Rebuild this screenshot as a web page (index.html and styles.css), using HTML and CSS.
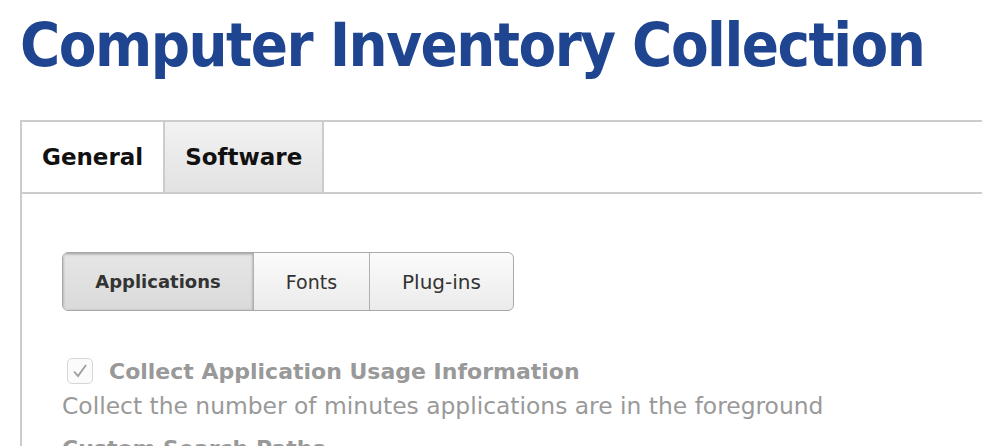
FILE: index.html
```html
<!DOCTYPE html>
<html lang="en">
<head>
    <meta charset="UTF-8">
    <meta name="viewport" content="width=device-width, initial-scale=1.0">
    <title>Computer Inventory Collection</title>
    <link rel="stylesheet" href="styles.css">
</head>
<body>
    <h1 class="page-title">Computer Inventory Collection</h1>

    <div class="panel">
        <div class="tabs">
            <div class="tab active">General</div>
            <div class="tab">Software</div>
        </div>

        <div class="panel-body">
            <div class="segmented">
                <div class="segment pressed">Applications</div>
                <div class="segment">Fonts</div>
                <div class="segment">Plug-ins</div>
            </div>

            <div class="option">
                <label class="check-row">
                    <span class="checkbox">
                        <svg width="16" height="16" viewBox="0 0 16 16">
                            <path d="M2 8.5 L6 13 L14 2" fill="none" stroke="#9c9c9c" stroke-width="1.8"/>
                        </svg>
                    </span>
                    <span class="option-label">Collect Application Usage Information</span>
                </label>
                <p class="option-help">Collect the number of minutes applications are in the foreground</p>
            </div>

            <div class="option">
                <div class="option-label">Custom Search Paths</div>
            </div>
        </div>
    </div>
</body>
</html>
```

FILE: styles.css
```css
body {
    margin: 0;
    padding: 0 0 0 20px;
    font-family: "DejaVu Sans", Verdana, sans-serif;
    background: #fff;
    overflow: hidden;
}
.page-title {
    margin: 0;
    padding-top: 12px;
    height: 120px;
    box-sizing: border-box;
    font-family: "DejaVu Sans Condensed", "DejaVu Sans", sans-serif;
    font-size: 61px;
    line-height: 66px;
    letter-spacing: -1.5px;
    font-weight: bold;
    color: #1f4591;
    white-space: nowrap;
}
.panel {
    border-top: 2px solid #cccccc;
    border-left: 2px solid #cccccc;
}
.tabs {
    display: flex;
    height: 70px;
    border-bottom: 2px solid #cccccc;
}
.tab {
    display: flex;
    align-items: center;
    padding: 0 20px;
    font-size: 23px;
    font-weight: bold;
    color: #111;
}
.tab.active {
    background: #fff;
}
.tab:not(.active) {
    background: linear-gradient(#f2f2f2, #e2e2e2);
    border-left: 2px solid #cccccc;
    border-right: 2px solid #cccccc;
}
.panel-body {
    padding: 58px 0 0 40px;
}
.segmented {
    display: inline-flex;
    height: 57px;
    border: 1px solid #a9a9a9;
    border-radius: 6px;
    overflow: hidden;
    background: linear-gradient(#fbfbfb, #ebebeb);
}
.segment {
    display: flex;
    align-items: center;
    justify-content: center;
    font-size: 19px;
    color: #333;
    border-left: 1px solid #b0b0b0;
}
.segment:nth-child(1) { width: 190px; border-left: none; }
.segment:nth-child(2) { width: 115px; }
.segment:nth-child(3) { width: 143px; font-size: 20px; }
.segment.pressed {
    font-size: 18px;
    font-weight: bold;
    background: linear-gradient(#e6e6e6, #dadada);
    box-shadow: inset 0 1px 3px rgba(0, 0, 0, 0.35);
}
.option {
    margin-top: 47px;
}
.check-row {
    display: flex;
    align-items: center;
    gap: 16px;
}
.checkbox {
    display: flex;
    align-items: center;
    justify-content: center;
    width: 26px;
    height: 26px;
    margin-left: 5px;
    border: 1px solid #d6d6d6;
    border-radius: 5px;
    box-sizing: border-box;
    background: #fbfbfb;
}
.option-label {
    font-size: 22px;
    font-weight: bold;
    color: #999;
}
.option-help {
    margin: 8px 0 0;
    font-size: 23.4px;
    color: #999;
}
.option + .option {
    margin-top: 16px;
}
```
